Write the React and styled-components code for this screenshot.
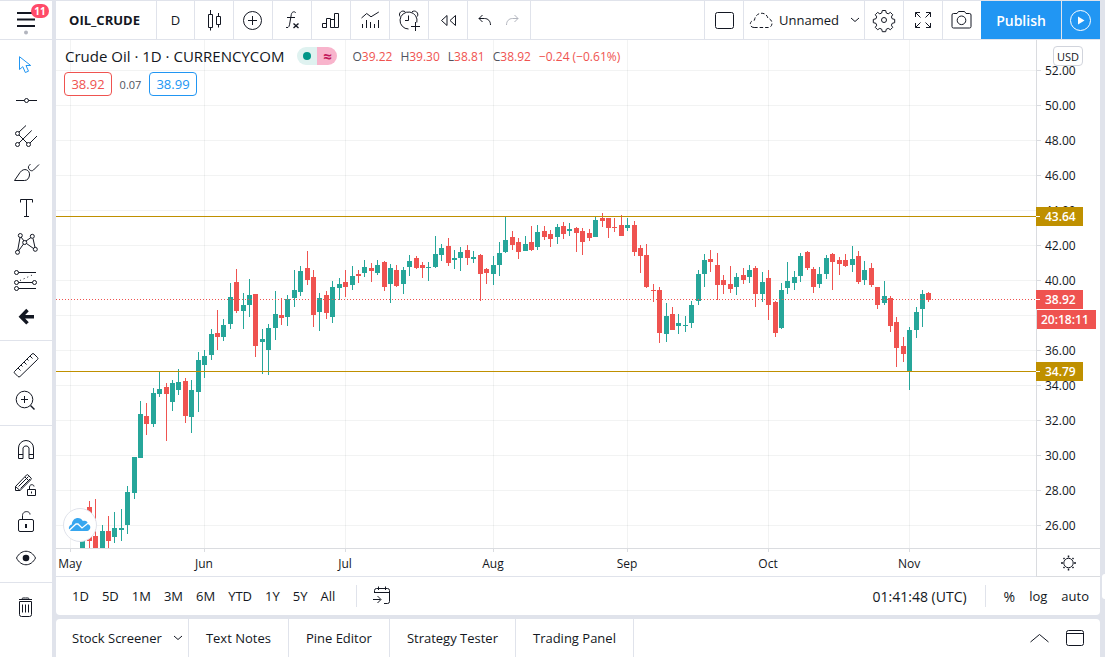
import styled, { createGlobalStyle, css } from 'styled-components';

const PRICE_TOP = 52;
const PRICE_TOP_Y = 30;
const PX_PER_UNIT = 17.5;
const FIRST_BAR_X = 26.3;
const BAR_STEP = 6.41;

const UP = '#26a69a';
const DOWN = '#ef5350';
const GOLD = '#bf9000';

// [direction, high, body top, body bottom, low] in pane pixels
const bars = [
  [1, 497, 497, 508, 508], [0, 461, 467, 501, 508], [0, 459, 496, 508, 508],
  [1, 485, 491, 508, 508], [0, 476, 491, 501, 508], [1, 472, 488, 497, 503],
  [1, 469, 488, 490, 501], [1, 446, 452, 485, 494], [1, 417, 417, 453, 459],
  [1, 361, 374, 418, 418], [0, 363, 376, 384, 395], [1, 348, 353, 384, 387],
  [1, 332, 349, 354, 357], [0, 343, 347, 354, 401], [1, 340, 343, 362, 371],
  [1, 329, 342, 350, 355], [0, 338, 341, 376, 383], [1, 340, 350, 377, 393],
  [1, 312, 320, 352, 372], [1, 310, 316, 325, 338], [1, 289, 294, 315, 320],
  [0, 270, 293, 297, 310], [1, 279, 285, 297, 301], [1, 243, 257, 284, 289],
  [0, 229, 242, 271, 273], [1, 253, 265, 271, 289], [1, 239, 255, 265, 277],
  [0, 254, 254, 306, 317], [1, 289, 299, 302, 334], [1, 284, 288, 310, 335],
  [1, 251, 274, 288, 300], [0, 258, 275, 278, 285], [1, 255, 259, 277, 286],
  [1, 230, 250, 258, 267], [1, 226, 231, 252, 256], [0, 211, 228, 240, 245],
  [0, 230, 237, 275, 287], [1, 253, 258, 272, 291], [0, 251, 255, 273, 279],
  [1, 241, 247, 277, 283], [1, 238, 244, 248, 260], [0, 230, 242, 247, 257],
  [1, 226, 236, 245, 250], [0, 230, 234, 236, 243], [1, 220, 227, 233, 237],
  [0, 223, 228, 231, 242], [1, 220, 225, 233, 235], [0, 221, 222, 247, 251],
  [1, 224, 228, 244, 263], [0, 225, 230, 246, 247], [1, 227, 230, 244, 254],
  [1, 215, 221, 227, 236], [0, 216, 218, 228, 229], [0, 222, 225, 228, 238],
  [1, 222, 227, 228, 241], [1, 196, 214, 227, 228], [1, 204, 208, 215, 221],
  [0, 198, 206, 223, 226], [1, 210, 218, 220, 229], [1, 207, 212, 218, 231],
  [0, 205, 210, 218, 225], [1, 211, 217, 219, 223], [0, 214, 215, 234, 261],
  [0, 228, 229, 233, 244], [1, 216, 225, 234, 245], [1, 202, 213, 225, 236],
  [1, 177, 200, 212, 213], [0, 191, 197, 205, 210], [0, 198, 202, 212, 219],
  [1, 196, 204, 211, 211], [0, 186, 202, 210, 211], [1, 185, 192, 207, 210],
  [0, 186, 191, 197, 200], [0, 190, 194, 199, 207], [1, 184, 187, 197, 204],
  [0, 182, 186, 194, 199], [1, 183, 189, 191, 196], [0, 187, 188, 193, 212],
  [0, 188, 191, 202, 215], [0, 189, 193, 198, 201], [1, 176, 180, 197, 197],
  [0, 173, 178, 181, 187], [0, 178, 178, 188, 198], [0, 178, 187, 188, 192],
  [0, 175, 185, 196, 196], [1, 178, 185, 188, 191], [0, 181, 185, 212, 216],
  [0, 205, 208, 216, 233], [0, 204, 215, 247, 248], [0, 244, 250, 251, 262],
  [0, 247, 250, 293, 303], [1, 263, 276, 294, 302], [0, 267, 274, 290, 290],
  [1, 274, 283, 286, 294], [1, 276, 285, 286, 292], [1, 261, 265, 283, 288],
  [1, 230, 234, 261, 265], [1, 214, 220, 234, 247], [0, 210, 219, 222, 232],
  [0, 213, 225, 245, 260], [0, 235, 240, 245, 254], [0, 226, 244, 249, 253],
  [1, 233, 237, 247, 255], [0, 228, 235, 240, 244], [1, 225, 230, 237, 243],
  [0, 226, 228, 254, 267], [1, 232, 242, 254, 262], [0, 230, 238, 265, 280],
  [0, 261, 262, 293, 297], [1, 243, 250, 288, 289], [1, 222, 241, 248, 254],
  [1, 231, 237, 243, 250], [1, 213, 216, 236, 242], [0, 211, 212, 228, 230],
  [0, 227, 229, 247, 253], [1, 227, 234, 244, 248], [1, 215, 218, 234, 239],
  [0, 213, 214, 222, 250], [0, 217, 220, 224, 235], [0, 214, 220, 226, 227],
  [1, 206, 219, 225, 232], [0, 211, 216, 242, 244], [1, 221, 230, 240, 245],
  [0, 223, 228, 245, 247], [0, 247, 247, 265, 269], [1, 241, 256, 263, 265],
  [0, 256, 258, 286, 292], [0, 277, 282, 308, 327], [0, 297, 306, 314, 322],
  [1, 287, 290, 332, 350], [1, 267, 272, 290, 298], [1, 250, 254, 269, 287],
  [0, 252, 253, 260, 262],
];

const months = [
  { label: 'May', x: 14 },
  { label: 'Jun', x: 148 },
  { label: 'Jul', x: 289 },
  { label: 'Aug', x: 437 },
  { label: 'Sep', x: 571 },
  { label: 'Oct', x: 712 },
  { label: 'Nov', x: 853 },
];

const prices = [52, 50, 48, 46, 44, 42, 40, 38, 36, 34, 32, 30, 28, 26];
const priceY = (price) => PRICE_TOP_Y + (PRICE_TOP - price) * PX_PER_UNIT;

// 38.00 sits fully under the countdown tag
const axisPrices = prices.filter((price) => price !== 38);

const levels = [
  { price: '43.64', y: 176, color: GOLD },
  { price: '38.92', y: 259, color: DOWN },
  { price: '34.79', y: 331, color: GOLD },
];

const ranges = ['1D', '5D', '1M', '3M', '6M', 'YTD', '1Y', '5Y', 'All'];

const ohlc = [
  ['O', '39.22'],
  ['H', '39.30'],
  ['L', '38.81'],
  ['C', '38.92'],
];

const icons = {
  candles: (
    <path d="M8.5 8.5h4v13h-4zM10.5 4v4.500M10.500 21.500v3M16.500 10.500h4v8h-4zM18.500 7v3.500M18.500 18.500v3" />
  ),
  compare: (
    <>
      <circle cx="13.500" cy="14.500" r="9" />
      <path d="M13.500 10v9M9 14.500h9" />
    </>
  ),
  fx: (
    <>
      <path d="M17.700 7c-.4-1.600-3.700-2-4.400 1.500l-1.800 10.300c-.4 2.600-2.300 3.400-3.500 2.500M9 11.500h8" />
      <path strokeWidth="1.400" d="M15.500 17.500l5 4.500M20.500 17.500l-5 4.500" />
    </>
  ),
  financials: (
    <path d="M5.500 17.500h4v4h-4zM9.500 21.500v-9h4v9M13.500 13.500h4v8h-4M17.500 14V7.500h4v14h-4" />
  ),
  templates: (
    <path d="M5.500 12l5.200-4.500 4.300 3.300L22.800 6M6.500 18v4M10.500 14v8M14.500 16v6M18.500 18v4M22.500 14v8" />
  ),
  alert: (
    <>
      <path d="M13.500 23a8.500 8.500 0 1 1 8.300-6.500M13.500 9.500v5H10M20.500 16v9M16 20.500h9" />
      <path d="M5 10.500C3 7 7 3.500 10.300 5.800M22.300 10.500C24.300 7 20.300 3.500 17 5.800" />
    </>
  ),
  rewind: <path d="M13 9.500v10L7.500 14.500zM21.500 9.500v10l-5.500-5z" />,
  undo: <path d="M12.500 9L9 12.500l3.500 3.500M9 12.500h5.500c3.500 0 6 2.500 6 6.500" />,
  redo: <path d="M16.500 9l3.500 3.500-3.500 3.500M20 12.500h-5.500c-3.500 0-6 2.500-6 6.500" />,
  layout: <rect x="5.500" y="6.500" width="18" height="16" rx="2" />,
  cloud: (
    <path
      strokeDasharray="3.500 2"
      d="M6 21.500c-5 0-5-7 .5-7.300C7.500 5.500 18.500 5 20 12.500c5 .5 5.500 8.500.5 9z"
    />
  ),
  settings: (
    <>
      <circle cx="14" cy="14" r="2.500" />
      <path
        strokeLinejoin="round"
        d="M12.300 4.500h3.400l.6 2.500 1.900.8 2.200-1.400 2.300 2.300-1.300 2.200.8 1.900 2.500.6v3.300l-2.500.6-.8 1.900 1.300 2.200-2.300 2.300-2.200-1.300-1.900.8-.6 2.500h-3.400l-.6-2.500-1.900-.8-2.200 1.300-2.300-2.300 1.400-2.200-.8-1.900-2.600-.6v-3.300l2.600-.6.8-1.900-1.400-2.200 2.300-2.300 2.200 1.400 1.900-.8z"
      />
    </>
  ),
  fullscreen: (
    <path d="M6.500 11V6.500H11M6.500 6.500l5 5M17 6.500h4.500V11M21.500 6.500l-5 5M6.500 17v4.500H11M6.500 21.500l5-5M17 21.500h4.500V17M21.500 21.500l-5-5" />
  ),
  camera: (
    <>
      <path d="M5.500 7.500H9l1.500-2h6l1.500 2h3.500a1.500 1.500 0 0 1 1.500 1.500v11.500a1.500 1.500 0 0 1-1.500 1.500h-16A1.500 1.500 0 0 1 4 20.500V9a1.500 1.500 0 0 1 1.500-1.500z" />
      <circle cx="13.500" cy="14.300" r="4.300" />
    </>
  ),
  play: (
    <>
      <circle cx="13.500" cy="14.500" r="10" />
      <path fill="currentColor" stroke="none" d="M11 10.500v8l6.500-4z" />
    </>
  ),
  cursor: (
    <path d="M7.500 6.700v12.800l3.300-2.800 2.500 5.800 3.200-1.300-2.500-5.700h4.700z" />
  ),
  trendLine: (
    <>
      <path d="M4 14.500h8.500M16.500 14.500H25" />
      <circle cx="14.500" cy="14.500" r="2" />
    </>
  ),
  pitchfork: (
    <>
      <circle cx="5.500" cy="11.500" r="2" />
      <circle cx="5.500" cy="22.500" r="2" />
      <circle cx="16.500" cy="22.500" r="2" />
      <path d="M7 10l7-6.500M7 21L19.700 8.500M18 21l7-7M7 13l8 8" />
    </>
  ),
  brush: (
    <path d="M2.500 22.500L8 14.500c4-5.500 10-2.500 9.500 2.500-.3 3-2 5.500-5 5.500zM18.500 6.500c-5 2 0 8.500 3 5.500l5.500-5.500" />
  ),
  text: <path d="M8.500 8.500v-3h12v3M14.500 5.500v17M12 22.500h5" />,
  pattern: (
    <>
      <path d="M5.700 20.500L8 7.500M9 7l3 4M14 11l5-3.500M21 8.500l2 9M6.500 21l5-7M14.500 13.500l7 5" />
      <circle cx="8.300" cy="5.500" r="2" />
      <circle cx="20.300" cy="6.300" r="2" />
      <circle cx="12.700" cy="12.500" r="2" />
      <circle cx="5.500" cy="22.300" r="2" />
      <circle cx="23.300" cy="19.300" r="2" />
    </>
  ),
  forecast: (
    <>
      <path d="M6.500 6.500H24M6.500 16.500h14M6.500 22.500H24" />
      <path strokeDasharray="1 3" d="M8 14.500l14.500-6.500" />
      <circle cx="4.500" cy="6.500" r="2" />
      <circle cx="4.500" cy="16.500" r="2" />
      <circle cx="22.500" cy="16.500" r="2" />
      <circle cx="4.500" cy="22.500" r="2" />
    </>
  ),
  arrowLeft: (
    <path strokeWidth="3.500" d="M15.500 8L9 14.700l6.500 6.700M9.500 14.700H22" />
  ),
  ruler: (
    <path d="M2.500 20.500L20 3q1-1 2 0l3.500 3.500q1 1 0 2L8 25.500q-1 1-2 0L2.500 22q-.7-.7 0-1.500zM6 17l2.500 2.500M9 14l1.500 1.500M12 11l2.500 2.500M15 8l1.500 1.500M18 5l2.500 2.500" />
  ),
  zoomIn: (
    <>
      <circle cx="12.500" cy="12.500" r="8.300" />
      <path d="M12.500 9v7M9 12.500h7" />
      <path strokeWidth="1.500" d="M18.500 18.500l4 4" />
    </>
  ),
  magnet: (
    <path d="M6.500 22.500V12a7.500 7.500 0 0 1 15 0v10.500H17V12a3.200 3.200 0 0 0-6 0v10.500zM6.500 18.500H11M17 18.500h4.500" />
  ),
  drawLock: (
    <>
      <path d="M3.500 14.500L14.500 3q.8-.8 1.600 0L19 6q.8.800 0 1.600L8 18.500H3.500zM3.500 14.500L8 18.500M6.500 14.500L16.500 4.500M8.500 16.500L18 7M13 5l4 4" />
      <path d="M15.500 17.500h8v6h-8zM17.500 17.500V15c0-3 4.500-3 4.500-.5M19.500 19.500v2" />
    </>
  ),
  unlock: (
    <>
      <rect x="6.500" y="11.500" width="15" height="12" rx="1.500" />
      <path d="M10.500 11.500V7.500c0-5 7.500-5 7.500-1" />
      <path strokeWidth="2" d="M14 16v4" />
    </>
  ),
  eye: (
    <>
      <path d="M4.500 14c4.500-9 14.500-9 19 0-4.500 9-14.500 9-19 0z" />
      <circle cx="14" cy="14" r="3.300" fill="currentColor" stroke="none" />
    </>
  ),
  trash: (
    <path d="M7 6.500h13M10 6.500c0-2 1-1.500 3.500-1.500s3.500-.5 3.500 1.500M7.500 8.500v13a2 2 0 0 0 2 2h8a2 2 0 0 0 2-2v-13zM10.500 11.500v8M13.500 11.500v8M16.500 11.500v8" />
  ),
  goTo: (
    <>
      <path d="M6.500 11V8.500a2 2 0 0 1 2-2h11a2 2 0 0 1 2 2v11a2 2 0 0 1-2 2H16M6.500 10.500h15M10.500 4.500v3.500M17.500 4.500v3.500" />
      <path d="M5 17.500h7.500M9.500 14l3.500 3.500L9.500 21" />
    </>
  ),
  axisGear: (
    <>
      <circle cx="13.500" cy="14" r="4.700" />
      <path
        strokeWidth="1.500"
        d="M13.500 6.500v2M13.500 19.500v2M6 14h2M19 14h2M8.500 9l1 1M18.500 9l-1 1M8.500 19l1-1M18.500 19l-1-1"
      />
    </>
  ),
  chevronUp: <path d="M5.500 18l9-7.500 9 7.500" />,
  panel: (
    <>
      <rect x="5.500" y="6.500" width="17" height="15" rx="2" />
      <path d="M5.500 9.500h17" />
    </>
  ),
};

const Icon = ({ name }) => (
  <IconSvg viewBox="0 0 28 28" aria-hidden="true">
    {icons[name]}
  </IconSvg>
);

const Chevron = () => (
  <ChevronSvg viewBox="0 0 10 6" aria-hidden="true">
    <path d="M1 1l4 3.500L9 1" />
  </ChevronSvg>
);

const toolGroups = [
  [
    ['cursor', 'Cursor'],
    ['trendLine', 'Trend line'],
    ['pitchfork', 'Pitchfork'],
    ['brush', 'Brush'],
    ['text', 'Text'],
    ['pattern', 'Patterns'],
    ['forecast', 'Forecast'],
    ['arrowLeft', 'Arrow'],
  ],
  [
    ['ruler', 'Measure'],
    ['zoomIn', 'Zoom in'],
  ],
  [
    ['magnet', 'Magnet mode'],
    ['drawLock', 'Stay in drawing mode'],
    ['unlock', 'Lock all drawings'],
    ['eye', 'Hide all drawings'],
  ],
  [['trash', 'Remove drawings']],
];

const Toolbar = () => (
  <Side>
    <MenuButton aria-label="Menu">
      <MenuSvg viewBox="0 0 20 24" aria-hidden="true">
        <path d="M1 2h18M1 8.500h18M1 15h18" />
        <circle cx="10" cy="21.500" r="2" />
      </MenuSvg>
      <Badge>11</Badge>
    </MenuButton>
    <Tools>
      {toolGroups.map((group, i) => (
        <ToolGroup key={i}>
          {group.map(([name, label]) => (
            <ToolButton key={name} aria-label={label} $active={name === 'cursor'}>
              <Icon name={name} />
            </ToolButton>
          ))}
        </ToolGroup>
      ))}
    </Tools>
  </Side>
);

const Header = () => (
  <HeaderBar>
    <SymbolButton>OIL_CRUDE</SymbolButton>
    <IntervalButton>D</IntervalButton>
    {['candles', 'compare', 'fx', 'financials', 'templates', 'alert', 'rewind'].map(
      (name) => (
        <HeaderButton key={name} aria-label={name}>
          <Icon name={name} />
        </HeaderButton>
      )
    )}
    <History>
      <HistoryButton aria-label="Undo">
        <Icon name="undo" />
      </HistoryButton>
      <HistoryButton aria-label="Redo" disabled>
        <Icon name="redo" />
      </HistoryButton>
    </History>
    <Spacer />
    <HeaderButton aria-label="Select layout">
      <Icon name="layout" />
    </HeaderButton>
    <SaveButton>
      <Icon name="cloud" />
      <span>Unnamed</span>
      <Chevron />
    </SaveButton>
    <HeaderButton aria-label="Settings">
      <Icon name="settings" />
    </HeaderButton>
    <HeaderButton aria-label="Fullscreen">
      <Icon name="fullscreen" />
    </HeaderButton>
    <SnapshotButton aria-label="Take a snapshot">
      <Icon name="camera" />
    </SnapshotButton>
    <PublishButton>Publish</PublishButton>
    <PlayButton aria-label="Start stream">
      <Icon name="play" />
    </PlayButton>
  </HeaderBar>
);

const Legend = () => (
  <LegendBox>
    <LegendRow>
      <Title>Crude Oil · 1D · CURRENCYCOM</Title>
      <Status>
        <StatusOpen />
        <StatusDelay>≈</StatusDelay>
      </Status>
      <Values>
        {ohlc.map(([key, value]) => (
          <span key={key}>
            {key}
            <Loss>{value}</Loss>
          </span>
        ))}
        <Loss>−0.24 (−0.61%)</Loss>
      </Values>
    </LegendRow>
    <LegendRow>
      <QuoteButton $color={DOWN}>38.92</QuoteButton>
      <Spread>0.07</Spread>
      <QuoteButton $color="#2196f3">38.99</QuoteButton>
    </LegendRow>
  </LegendBox>
);

const Pane = () => (
  <PaneBox>
    <ChartSvg role="img" aria-label="Crude Oil daily candles">
      <g stroke="#2a2e39" strokeOpacity="0.06">
        {prices.map((p) => (
          <line key={p} x1="0" x2="100%" y1={priceY(p) + 0.5} y2={priceY(p) + 0.5} />
        ))}
        {months.map(({ label, x }) => (
          <line key={label} x1={x + 0.5} x2={x + 0.5} y1="0" y2="100%" />
        ))}
      </g>
      {bars.map(([up, high, top, bottom, low], i) => {
        const x = Math.round(FIRST_BAR_X + i * BAR_STEP);
        return (
          <g key={i} fill={up ? UP : DOWN}>
            <rect x={x} y={high} width="1" height={low - high} />
            <rect x={x - 2} y={top} width="5" height={bottom - top} />
          </g>
        );
      })}
      <line x1="0" x2="100%" y1="176.5" y2="176.5" stroke={GOLD} />
      <line x1="0" x2="100%" y1="331.5" y2="331.5" stroke={GOLD} />
      <line x1="0" x2="100%" y1="259.5" y2="259.5" stroke={DOWN} strokeDasharray="1 2" />
    </ChartSvg>
    <Legend />
    <Logo href="#" aria-label="Chart provider">
      <LogoSvg viewBox="0 0 24 16" aria-hidden="true">
        <path
          fill="#37a6ef"
          d="M3 14C0 13 0 8.500 3.800 7.500 4.500 0 12.500-.5 14.800 4c3.200-1 5 .5 5.300 3.200 3.200.8 3 6-.8 6.800z"
        />
        <path fill="none" stroke="#fff" strokeWidth="1.300" d="M1 13.500l7-6.500h2l4 4 7.500-6" />
      </LogoSvg>
    </Logo>
  </PaneBox>
);

const PriceAxis = () => (
  <AxisBox>
    <ChartSvg>
      <line x1="0.5" x2="0.5" y1="0" y2="100%" stroke="#dadce0" />
      {axisPrices.map((p) => (
        <g key={p}>
          <line x1="1" x2="5" y1={priceY(p) + 0.5} y2={priceY(p) + 0.5} stroke="#dadce0" />
          <AxisText x="9" y={priceY(p) + 5}>
            {p.toFixed(2)}
          </AxisText>
        </g>
      ))}
      {levels.map(({ price, y, color }) => (
        <g key={price}>
          <rect x="0" y={y - 9} width="47" height="19" fill={color} />
          <line x1="0" x2="4" y1={y + 0.5} y2={y + 0.5} stroke="#fff" />
          <TagText x="9" y={y + 5}>
            {price}
          </TagText>
        </g>
      ))}
      <rect x="1" y="270" width="59" height="19" fill={DOWN} />
      <TagText x="5" y="284">
        20:18:11
      </TagText>
    </ChartSvg>
    <CurrencyButton>USD</CurrencyButton>
  </AxisBox>
);

const TimeAxis = () => (
  <TimeBox>
    <ChartSvg>
      {months.map(({ label, x }) => (
        <g key={label}>
          <line x1={x + 0.5} x2={x + 0.5} y1="0" y2="3" stroke="#dadce0" />
          <MonthText x={x} y="19">
            {label}
          </MonthText>
        </g>
      ))}
    </ChartSvg>
  </TimeBox>
);

const App = () => {
  return (
    <>
      <GlobalStyle />
      <Shell>
        <Toolbar />
        <Main>
          <Header />
          <ChartGrid>
            <Pane />
            <PriceAxis />
            <TimeAxis />
            <AxisSettings aria-label="Axis settings">
              <Icon name="axisGear" />
            </AxisSettings>
          </ChartGrid>
          <RangeBar>
            <Ranges>
              {ranges.map((range) => (
                <RangeButton key={range}>{range}</RangeButton>
              ))}
            </Ranges>
            <Divider />
            <GoToButton aria-label="Go to date">
              <Icon name="goTo" />
            </GoToButton>
            <Spacer />
            <ScaleButton $large>01:41:48 (UTC)</ScaleButton>
            <Divider />
            <ScaleButton $large>%</ScaleButton>
            <ScaleButton>log</ScaleButton>
            <ScaleButton>auto</ScaleButton>
          </RangeBar>
          <BottomBar>
            <Tab>
              Stock Screener
              <Chevron />
            </Tab>
            <Tab>Text Notes</Tab>
            <Tab>Pine Editor</Tab>
            <Tab>Strategy Tester</Tab>
            <Tab>Trading Panel</Tab>
            <Spacer />
            <PanelButton aria-label="Open panel">
              <Icon name="chevronUp" />
            </PanelButton>
            <PanelButton aria-label="Maximize panel">
              <Icon name="panel" />
            </PanelButton>
          </BottomBar>
        </Main>
        <Gutter>
          <Handle aria-label="Show side panel" />
        </Gutter>
      </Shell>
    </>
  );
};

export default App;

const GlobalStyle = createGlobalStyle`
  * {
    box-sizing: border-box;
  }

  body {
    margin: 0;
    background: #e0e3eb;
    color: #131722;
    font-family: 'Trebuchet MS', 'Open Sans', sans-serif;
    font-size: 13px;
  }

  button {
    padding: 0;
    border: 0;
    background: none;
    color: inherit;
    font: inherit;
    white-space: nowrap;
    cursor: pointer;
  }
`;

const center = css`
  display: flex;
  align-items: center;
  justify-content: center;
`;

const Shell = styled.div`
  display: flex;
  height: 100vh;
  min-height: 640px;
  padding-top: 1px;
  overflow: hidden;
`;

const Side = styled.aside`
  display: flex;
  flex-direction: column;
  flex: none;
  width: 52px;
  margin-right: 4px;
  background: #fff;
`;

const MenuButton = styled.button`
  ${center}
  position: relative;
  flex: none;
  height: 39px;
  border-bottom: 1px solid #e0e3eb;
`;

const MenuSvg = styled.svg`
  width: 20px;
  height: 24px;
  margin-top: 6px;
  fill: #b2b5be;
  stroke: #131722;
  stroke-width: 2;

  circle {
    stroke: none;
  }
`;

const Badge = styled.span`
  ${center}
  position: absolute;
  top: 3px;
  left: 31px;
  width: 18px;
  height: 14px;
  border-radius: 7px;
  background: #ff4a68;
  color: #fff;
  font-size: 10px;
  font-weight: 700;
`;

const Tools = styled.div`
  flex: 1;
`;

const ToolGroup = styled.div`
  padding: 6px 0;
  border-bottom: 1px solid #e0e3eb;

  &:last-child {
    border-bottom: 0;
  }
`;

const ToolButton = styled.button`
  ${center}
  width: 100%;
  height: 36px;
  color: ${({ $active }) => ($active ? '#2196f3' : '#131722')};
`;

const IconSvg = styled.svg`
  flex: none;
  width: 28px;
  height: 28px;
  fill: none;
  stroke: currentColor;
`;

const ChevronSvg = styled.svg`
  flex: none;
  width: 10px;
  height: 6px;
  fill: none;
  stroke: currentColor;
`;

const Main = styled.main`
  display: flex;
  flex-direction: column;
  flex: 1;
  min-width: 0;
`;

const HeaderBar = styled.header`
  display: flex;
  flex: none;
  height: 39px;
  border-bottom: 1px solid #e0e3eb;
  background: #fff;
`;

const HeaderButton = styled.button`
  ${center}
  flex: none;
  width: 39px;
  border-right: 1px solid #e0e3eb;
`;

const SymbolButton = styled(HeaderButton)`
  width: 101px;
  padding-right: 3px;
  font-weight: 700;
`;

const IntervalButton = styled(HeaderButton)`
  width: 38px;
`;

const SnapshotButton = styled(HeaderButton)`
  width: 38px;
  border-right: 0;
`;

const History = styled.div`
  ${center}
  flex: none;
  width: 63px;
  padding-right: 2px;
  border-right: 1px solid #e0e3eb;
`;

const HistoryButton = styled.button`
  height: 28px;

  &:disabled {
    color: #b2b5be;
  }
`;

const Spacer = styled.div`
  flex: 1;

  ${HeaderBar} > & {
    border-right: 1px solid #e0e3eb;
  }
`;

const SaveButton = styled(HeaderButton)`
  gap: 3px;
  width: 121px;

  ${ChevronSvg} {
    margin-left: 8px;
  }
`;

const PublishButton = styled.button`
  width: 80px;
  background: #2196f3;
  color: #fff;
  font-size: 14px;
  font-weight: 600;
`;

const PlayButton = styled.button`
  ${center}
  width: 39px;
  border-left: 1px solid #e0e3eb;
  background: #2196f3;
  color: #fff;
`;

const ChartGrid = styled.section`
  display: grid;
  flex: 1;
  grid-template-columns: minmax(0, 1fr) 64px;
  grid-template-rows: minmax(0, 1fr) 29px;
  min-height: 0;
  background: #fff;
`;

const PaneBox = styled.div`
  position: relative;
  overflow: hidden;
`;

const ChartSvg = styled.svg`
  display: block;
  width: 100%;
  height: 100%;
`;

const LegendBox = styled.div`
  position: absolute;
  top: 4px;
  left: 8px;
  display: flex;
  flex-direction: column;
  gap: 4px;
`;

const LegendRow = styled.div`
  display: flex;
  align-items: center;
  height: 24px;
`;

const Title = styled.h1`
  margin: 0 13px 0 1px;
  font-size: 15px;
  font-weight: 400;
  white-space: nowrap;
`;

const Status = styled.div`
  display: flex;
  width: 40px;
  height: 18px;
  border-radius: 9px;
  overflow: hidden;
`;

const StatusOpen = styled.span`
  ${center}
  flex: 1;
  background: #dff2f0;

  &::before {
    content: '';
    width: 8px;
    height: 8px;
    border-radius: 50%;
    background: #009688;
  }
`;

const StatusDelay = styled.span`
  ${center}
  flex: 1;
  background: #f8b4cc;
  color: #c2185b;
  font-size: 15px;
  font-weight: 700;
`;

const Values = styled.div`
  display: flex;
  gap: 8px;
  margin-left: 15px;
  color: #50535e;
  font-size: 12px;
  white-space: nowrap;
`;

const Loss = styled.span`
  color: ${DOWN};
`;

const QuoteButton = styled.button`
  width: 48px;
  height: 24px;
  border: 1px solid ${({ $color }) => $color};
  border-radius: 4px;
  background: #fff;
  color: ${({ $color }) => $color};
  font-size: 13px;
`;

const Spread = styled.span`
  width: 37px;
  color: #50535e;
  font-size: 11px;
  text-align: center;
`;

const Logo = styled.a`
  ${center}
  position: absolute;
  bottom: 6px;
  left: 7px;
  width: 34px;
  height: 34px;
  border: 1px solid #e0e3eb;
  border-radius: 50%;
  background: #fff;
`;

const LogoSvg = styled.svg`
  width: 24px;
  height: 16px;
`;

const AxisBox = styled.div`
  position: relative;
`;

const AxisText = styled.text`
  fill: #131722;
  font-size: 12px;
`;

const TagText = styled(AxisText)`
  fill: #fff;
  font-weight: 600;
`;

const MonthText = styled(AxisText)`
  font-weight: 500;
  text-anchor: middle;
`;

const CurrencyButton = styled.button`
  position: absolute;
  top: 6px;
  left: 17px;
  width: 30px;
  height: 20px;
  border: 1px solid #d1d4dc;
  border-radius: 4px;
  background: #fff;
  font-size: 11px;
`;

const TimeBox = styled.div`
  border-top: 1px solid #dadce0;
  border-bottom: 1px solid #e0e3eb;
  overflow: hidden;
`;

const AxisSettings = styled.button`
  ${center}
  border: solid #dadce0;
  border-width: 1px 0 1px 1px;
`;

const RangeBar = styled.div`
  display: flex;
  align-items: center;
  flex: none;
  height: 38px;
  padding: 0 4px 0 10px;
  border-radius: 0 0 4px 4px;
  background: #fff;
`;

const Ranges = styled.div`
  display: flex;
  gap: 1px;
  margin-right: 4px;
`;

const RangeButton = styled.button`
  height: 28px;
  padding: 0 6px;
`;

const ScaleButton = styled(RangeButton)`
  padding: 0 7px;
  font-size: ${({ $large }) => ($large ? '14px' : '13px')};
`;

const Divider = styled.span`
  width: 1px;
  height: 22px;
  margin: 0 11px;
  background: #e0e3eb;
`;

const GoToButton = styled.button`
  height: 28px;
`;

const BottomBar = styled.nav`
  display: flex;
  flex: none;
  height: 38px;
  margin-top: 4px;
  padding-right: 11px;
  border-radius: 4px 4px 0 0;
  background: #fff;
`;

const Tab = styled.button`
  display: flex;
  align-items: center;
  gap: 11px;
  padding: 0 17px;
  border-right: 1px solid #e0e3eb;

  &:first-child {
    padding: 0 5px 0 16px;
  }
`;

const PanelButton = styled.button`
  ${center}
  margin-left: 8px;
`;

const Gutter = styled.div`
  position: relative;
  flex: none;
  width: 5px;
`;

const Handle = styled.button`
  position: absolute;
  right: 0;
  bottom: 58px;
  width: 3px;
  height: 25px;
  border-radius: 3px 0 0 3px;
  background: #fff;
`;
